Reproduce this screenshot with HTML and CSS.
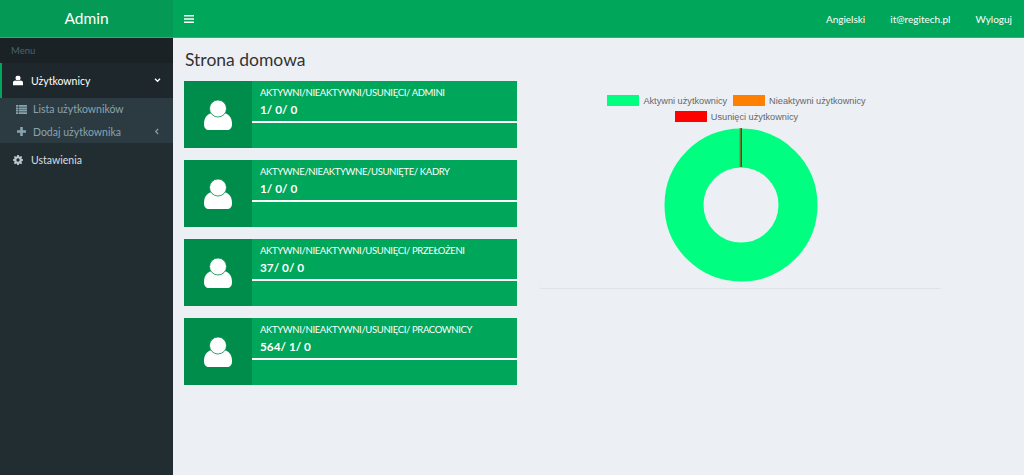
FILE: index.html
```html
<!DOCTYPE html>
<html lang="pl">
<head>
  <meta charset="UTF-8">
  <meta name="viewport" content="width=device-width, initial-scale=1.0">
  <title>Admin</title>
  <link rel="stylesheet" href="styles.css">
</head>
<body>
  <header class="topbar">
    <div class="logo">Admin</div>
    <div class="navbar">
      <svg class="burger" viewBox="0 0 10 8" width="10" height="8"><path d="M0 0h10v1.6H0zM0 3.2h10v1.6H0zM0 6.4h10V8H0z" fill="#fff"/></svg>
      <nav class="nav-links">
        <a>Angielski</a>
        <a>it@regitech.pl</a>
        <a>Wyloguj</a>
      </nav>
    </div>
  </header>

  <div class="wrapper">
    <aside class="sidebar">
      <div class="menu-header">Menu</div>
      <div class="menu-item active">
        <svg class="menu-icon" viewBox="0 0 12 12" width="10" height="11"><use href="#user"/></svg>
        <span>Użytkownicy</span>
        <svg class="chevron" viewBox="0 0 8 6" width="7" height="5"><path d="M1 1l3 3 3-3" fill="none" stroke="#fff" stroke-width="1.6"/></svg>
      </div>
      <div class="submenu">
        <div class="sub-item">
          <svg class="sub-icon" viewBox="0 0 11 9" width="11" height="9"><path d="M0 0h2.400v1.800H0zM3 0h8v1.800H3zM0 2.400h2.400v1.800H0zM3 2.400h8v1.800H3zM0 4.800h2.400v1.800H0zM3 4.800h8v1.800H3zM0 7.200h2.400V9H0zM3 7.200h8V9H3z" fill="#8aa4af"/></svg>
          <span>Lista użytkowników</span>
        </div>
        <div class="sub-item">
          <svg class="sub-icon" viewBox="0 0 11 9" width="11" height="9"><path d="M4.200 0h2.600v3.200H10v2.600H6.800V9H4.200V5.800H1V3.200h3.200z" fill="#8aa4af"/></svg>
          <span>Dodaj użytkownika</span>
          <svg class="chevron-left" viewBox="0 0 6 8" width="5" height="7"><path d="M5 1L2 4l3 3" fill="none" stroke="#8aa4af" stroke-width="1.300"/></svg>
        </div>
      </div>
      <div class="menu-item">
        <svg class="menu-icon" viewBox="0 0 12 12" width="10" height="10"><path d="M5 0h2l.3 1.600 1 .4L9.700 1.100l1.300 1.300-.9 1.400.4 1L12 5v2l-1.500.3-.4 1 .9 1.400-1.300 1.300-1.400-.9-1 .4L7 12H5l-.3-1.500-1-.4-1.400.9L1 9.700l.9-1.400-.4-1L0 7V5l1.500-.3.4-1L1 2.400 2.300 1.100l1.400.9 1-.4zM6 4a2 2 0 100 4 2 2 0 000-4z" fill="#b8c7ce" fill-rule="evenodd"/></svg>
        <span>Ustawienia</span>
      </div>
    </aside>

    <main class="content">
      <h1 class="page-title">Strona domowa</h1>
      <div class="columns">
        <div class="boxes">
          <div class="info-box">
            <div class="box-icon"><svg viewBox="0 0 28 30" width="28" height="30"><use href="#user-big"/></svg></div>
            <div class="box-body">
              <div class="box-text">AKTYWNI/NIEAKTYWNI/USUNIĘCI/ ADMINI</div>
              <div class="box-number">1/ 0/ 0</div>
              <div class="box-line"></div>
            </div>
          </div>
          <div class="info-box">
            <div class="box-icon"><svg viewBox="0 0 28 30" width="28" height="30"><use href="#user-big"/></svg></div>
            <div class="box-body">
              <div class="box-text">AKTYWNE/NIEAKTYWNE/USUNIĘTE/ KADRY</div>
              <div class="box-number">1/ 0/ 0</div>
              <div class="box-line"></div>
            </div>
          </div>
          <div class="info-box">
            <div class="box-icon"><svg viewBox="0 0 28 30" width="28" height="30"><use href="#user-big"/></svg></div>
            <div class="box-body">
              <div class="box-text">AKTYWNI/NIEAKTYWNI/USUNIĘCI/ PRZEŁOŻENI</div>
              <div class="box-number">37/ 0/ 0</div>
              <div class="box-line"></div>
            </div>
          </div>
          <div class="info-box">
            <div class="box-icon"><svg viewBox="0 0 28 30" width="28" height="30"><use href="#user-big"/></svg></div>
            <div class="box-body">
              <div class="box-text">AKTYWNI/NIEAKTYWNI/USUNIĘCI/ PRACOWNICY</div>
              <div class="box-number">564/ 1/ 0</div>
              <div class="box-line"></div>
            </div>
          </div>
        </div>

        <section class="chart-card">
          <div class="legend">
            <div class="legend-item"><i class="swatch green"></i>Aktywni użytkownicy</div>
            <div class="legend-item"><i class="swatch orange"></i>Nieaktywni użytkownicy</div>
            <div class="legend-item"><i class="swatch red"></i>Usunięci użytkownicy</div>
          </div>
          <svg class="donut" viewBox="0 0 154 154" width="154" height="154">
            <circle cx="77" cy="77" r="57" fill="none" stroke="#00ff80" stroke-width="39"/>
            <rect x="75.500" y="0" width="1" height="39" fill="#d8601a"/>
            <rect x="76.500" y="0" width="1.500" height="39" fill="#7a3a14"/>
          </svg>
        </section>
      </div>
    </main>
  </div>

  <svg class="defs" width="0" height="0">
    <symbol id="user" viewBox="0 0 12 12">
      <circle cx="6" cy="3" r="3" fill="#fff"/>
      <path d="M0 12V8.500C0 7 1.500 6 3 6c1 .8 5 .8 6 0 1.500 0 3 1 3 2.500V12z" fill="#fff"/>
    </symbol>
    <symbol id="user-big" viewBox="0 0 28 30">
      <path d="M0 24c0-7 4-11 9-11h10c5 0 9 4 9 11 0 4-2 6-5 6H5c-3 0-5-2-5-6z" fill="#fff"/>
      <circle cx="14" cy="8.500" r="8.500" fill="#fff" stroke="#008d4c" stroke-width=".8"/>
    </symbol>
  </svg>
</body>
</html>
```

FILE: styles.css
```css
html, body {
  height: 100%;
  margin: 0;
  overflow: hidden;
}

body {
  font-family: Lato, "Noto Sans", sans-serif;
  background-color: #ecf0f5;
  color: #333;
  display: flex;
  flex-direction: column;
}

.defs {
  position: absolute;
}

/* top bar */
.topbar {
  display: flex;
  height: 37px;
  border-bottom: 1px solid #1fb873;
  flex-shrink: 0;
}

.logo {
  width: 173px;
  background-color: #049a55;
  color: #fff;
  font-size: 15.500px;
  line-height: 36px;
  text-align: center;
}

.navbar {
  flex: 1;
  display: flex;
  align-items: center;
  justify-content: space-between;
  background-color: #00a65a;
  padding-left: 11px;
}

.burger {
  display: block;
}

.nav-links {
  display: flex;
  gap: 25px;
  padding-right: 12px;
}

.nav-links a {
  color: #fff;
  font-size: 10px;
}

/* sidebar */
.wrapper {
  flex: 1;
  display: flex;
  min-height: 0;
}

.sidebar {
  width: 173px;
  flex-shrink: 0;
  background-color: #222d32;
}

.menu-header {
  height: 25px;
  padding-left: 11px;
  font-size: 9.500px;
  line-height: 25px;
  color: #4b646f;
  background-color: #1a2226;
}

.menu-item {
  display: flex;
  align-items: center;
  height: 35px;
  padding-left: 11px;
  gap: 8px;
  font-size: 10.500px;
  color: #d5dfe3;
  border-left: 2px solid transparent;
}

.menu-item.active {
  color: #fff;
  background-color: #1e282c;
  border-left-color: #00a65a;
}

.menu-item:last-child {
  margin-top: -1px;
}

.menu-icon {
  display: block;
  flex-shrink: 0;
}

.chevron {
  margin-left: auto;
  margin-right: 12px;
}

.submenu {
  background-color: #2c3b41;
  height: 45px;
  display: flex;
  flex-direction: column;
  justify-content: center;
}

.sub-item {
  display: flex;
  align-items: center;
  height: 22.500px;
  padding-left: 16px;
  gap: 6px;
  font-size: 10.500px;
  color: #8aa4af;
}

.sub-icon {
  display: block;
  flex-shrink: 0;
}

.chevron-left {
  margin-left: auto;
  margin-right: 14px;
}

/* content */
.content {
  flex: 1;
  padding: 11px 0 0 11px;
  min-width: 0;
}

.page-title {
  margin: 0 0 10px 1px;
  font-size: 17.500px;
  font-weight: 400;
  line-height: 22px;
  color: #333;
}

.columns {
  display: flex;
  align-items: flex-start;
  gap: 22px;
}

.boxes {
  width: 333px;
  display: flex;
  flex-direction: column;
  gap: 12px;
}

.info-box {
  display: flex;
  height: 67px;
  background-color: #00a65a;
  color: #fff;
}

.box-icon {
  width: 68px;
  display: flex;
  align-items: center;
  justify-content: center;
  background-color: #008d4c;
}

.box-body {
  flex: 1;
}

.box-text {
  padding: 5px 0 0 8px;
  font-size: 9.500px;
  letter-spacing: -0.35px;
  line-height: 13px;
}

.box-number {
  padding: 3px 0 0 8px;
  font-size: 11.800px;
  font-weight: 700;
  line-height: 16px;
}

.box-line {
  height: 2px;
  margin-top: 3px;
  background-color: #fff;
}

/* chart */
.chart-card {
  width: 403px;
  height: 209px;
  margin-top: -1px;
  padding-top: 15px;
  box-sizing: border-box;
  border-bottom: 1px solid #dfe3e8;
  border-radius: 3px;
  display: flex;
  flex-direction: column;
  align-items: center;
}

.legend {
  display: flex;
  flex-wrap: wrap;
  justify-content: center;
  column-gap: 6px;
  row-gap: 5px;
  width: 290px;
  margin-right: 8px;
  font-family: "Liberation Sans", Arial, sans-serif;
  font-size: 9.200px;
  color: #666;
}

.legend-item {
  display: flex;
  align-items: center;
  height: 11px;
  gap: 4px;
  white-space: nowrap;
}

.swatch {
  display: block;
  width: 32px;
  height: 11px;
}

.swatch.green { background-color: #00ff80; }
.swatch.orange { background-color: #ff8000; }
.swatch.red { background-color: #ff0000; }

.donut {
  display: block;
  margin-top: 6px;
}
```
